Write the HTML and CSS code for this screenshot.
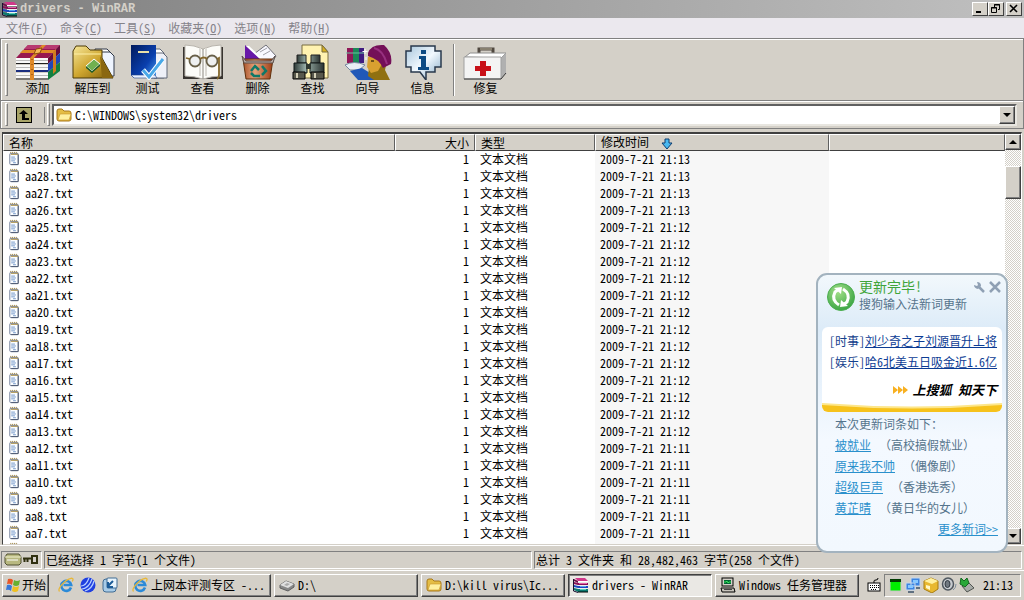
FILE: index.html
```html
<!DOCTYPE html>
<html lang="zh-CN">
<head>
    <meta charset="UTF-8">
    <meta name="viewport" content="width=device-width, initial-scale=1.0">
    <title>drivers - WinRAR</title>
    <link rel="stylesheet" href="styles.css">
</head>
<body>

    <!-- shared icons -->
    <svg class="defs" aria-hidden="true">
        <defs>
            <linearGradient id="gold" x1="0" y1="0" x2="1" y2="1">
                <stop offset="0" stop-color="#f6e79a"/><stop offset=".5" stop-color="#cfa62f"/><stop offset="1" stop-color="#7d5c08"/>
            </linearGradient>
            <linearGradient id="navy" x1="0" y1="0" x2="1" y2="1">
                <stop offset="0" stop-color="#001a5c"/><stop offset=".6" stop-color="#0a3fae"/><stop offset="1" stop-color="#4aa0f0"/>
            </linearGradient>
            <linearGradient id="copper" x1="0" y1="0" x2="1" y2="0">
                <stop offset="0" stop-color="#a8532a"/><stop offset=".4" stop-color="#e8a47c"/><stop offset="1" stop-color="#9a3c14"/>
            </linearGradient>
            <linearGradient id="steel" x1="0" y1="0" x2="1" y2="0">
                <stop offset="0" stop-color="#2e3a38"/><stop offset=".4" stop-color="#9db3ac"/><stop offset="1" stop-color="#2a3230"/>
            </linearGradient>
            <linearGradient id="bubble" x1="0" y1="0" x2="1" y2="1">
                <stop offset="0" stop-color="#a8c6dc"/><stop offset=".5" stop-color="#f2f9ff"/><stop offset="1" stop-color="#7fa6c4"/>
            </linearGradient>
            <radialGradient id="green" cx=".4" cy=".3" r=".8">
                <stop offset="0" stop-color="#a4e08a"/><stop offset="1" stop-color="#2f9e3c"/>
            </radialGradient>
        </defs>
        <symbol id="books" viewBox="0 0 16 16">
            <path d="M2 1h10l3 3H5z" fill="#d0388a"/><path d="M5 4h10v1H5z" fill="#fff"/>
            <path d="M1 2l4 2v2L1 4z" fill="#701048"/>
            <path d="M1 5l4 1h10v2H5L1 7z" fill="#8a1058"/><path d="M6 6h8v1H6z" fill="#e060a8"/>
            <path d="M1 8l4 1h10v2H5l-4-1z" fill="#1c48c0"/><path d="M5 8h10v1H5zM5 11h10v1H5z" fill="#eee"/><path d="M7 9h6v1H7z" fill="#58a0f0"/>
            <path d="M1 11l4 1h10v3H5l-4-2z" fill="#0c7a70"/><path d="M5 15h10" stroke="#000"/><path d="M7 12h6v1H7z" fill="#58d0b8"/>
            <path d="M.5 2v12L5 15.500" fill="none" stroke="#181030"/>
        </symbol>
        <symbol id="folder" viewBox="0 0 16 16">
            <path d="M1 4q0-2 2-2h3l2 2h5q2 0 2 2v6q0 2-2 2H3q-2 0-2-2z" fill="#e4bd45" stroke="#a8791a"/>
            <path d="M2 13l2-6h11l-2 6z" fill="#fff0a0" stroke="#c8962a" stroke-width=".6"/>
        </symbol>
        <symbol id="note" viewBox="0 0 12 16">
            <rect x="1.500" y="2.500" width="9" height="12" rx="1" fill="#fbfdff" stroke="#6f7c96"/>
            <path d="M10.500 4v10.500H3" fill="none" stroke="#4c5870"/>
            <path d="M2 1.500h1M4 1.500h1M6 1.500h1M8 1.500h1M2.500 3.500h8" stroke="#a08030"/>
            <path d="M3 6.500h4M3 8.500h5M3 10.500h4M5 12.500h3" stroke="#6f94c8"/>
        </symbol>
        <symbol id="ie" viewBox="0 0 16 16">
            <path d="M13 10.500A5 5 0 1 1 13.200 8H5.500" fill="none" stroke="#2b8ad8" stroke-width="2.600"/>
            <path d="M1.500 14.500C-1 12 7 2.500 13 1.300c3-.4 2 2 1.200 3.200" fill="none" stroke="#e8b838" stroke-width="1.300"/>
        </symbol>
        <symbol id="pc" viewBox="0 0 16 16">
            <rect x="2" y="1" width="11" height="8" fill="#d4d0c8" stroke="#000"/><rect x="4" y="3" width="7" height="4" fill="#063"/>
            <path d="M4 5h2l1-1 1 2 1-1h2" stroke="#4f6" fill="none" stroke-width=".8"/>
            <path d="M1 11h13l1 4H2z" fill="#c8c4bc" stroke="#000"/><path d="M4 12.500h8" stroke="#444"/>
        </symbol>
    </svg>

    <div class="desktop">
        <header class="title-bar">
            <svg class="icon16"><use href="#books"/></svg>
            <h1>drivers - WinRAR</h1>
            <div class="window-buttons">
                <button type="button" aria-label="最小化"><svg viewBox="0 0 12 10"><path d="M2 8h5" stroke="#000" stroke-width="2"/></svg></button>
                <button type="button" aria-label="还原"><svg viewBox="0 0 12 10"><path d="M4.500 3V.5h5v5H8M4 1h6M1.500 3.500h5v5h-5zM1 4h6" fill="none" stroke="#000"/></svg></button>
                <button type="button" class="close" aria-label="关闭"><svg viewBox="0 0 12 10"><path d="M2 1l7 7M9 1L2 8" stroke="#000" stroke-width="1.600"/></svg></button>
            </div>
        </header>

        <nav class="menu-bar">
            <button type="button">文件(<u>F</u>)</button>
            <button type="button">命令(<u>C</u>)</button>
            <button type="button">工具(<u>S</u>)</button>
            <button type="button">收藏夹(<u>O</u>)</button>
            <button type="button">选项(<u>N</u>)</button>
            <button type="button">帮助(<u>H</u>)</button>
        </nav>

        <div class="toolbar">
            <span class="grip"></span>
            <button type="button">
                <svg viewBox="0 0 48 36">
                    <path d="M2 14L14 1h32L34 14z" fill="#981850"/><path d="M14 1h32l-4 4H10z" fill="#b83a70"/>
                    <path d="M34 14L46 1v8L34 20z" fill="#6a0c3c"/><path d="M34 20L46 9v9L34 28z" fill="#2046b8"/><path d="M34 28l12-10v9L34 36z" fill="#128040"/>
                    <path d="M2 14h32v5H2zM2 21h32v5H2zM2 29h32v5H2z" fill="#f8f8f8"/>
                    <path d="M2 19.500h32M2 35h32" stroke="#202020"/><path d="M2 27h32" stroke="#1a2e80" stroke-width="2"/><path d="M2 16.500h32M2 23.500h32M2 31.500h32" stroke="#b8b8b8"/>
                    <path d="M16 14L28 1h4L20 14v22h-4zM9 6h32v3H6z" fill="#e08a28"/><path d="M39 8l3-3v22l-3 3z" fill="#d07c20"/>
                    <path d="M18 15v20" stroke="#7c3c08" stroke-dasharray="1 4"/><path d="M22 5l6-1-2 5-6 1z" fill="#f8b858" stroke="#8a480c"/>
                </svg>添加
            </button>
            <button type="button">
                <svg viewBox="0 0 48 36">
                    <path d="M26 5h12l5 5v20H26z" fill="#fff" stroke="#303848"/><path d="M32 8h9l4 4v20H32z" fill="#eef4ff" stroke="#303848"/>
                    <path d="M4 34V7l3-5h10l4 4h12v8l11 20z" fill="url(#gold)" stroke="#4c3a08"/>
                    <path d="M5 10h27" stroke="#fff0a8"/><path d="M31 12l13 22H33z" fill="#8a6710"/>
                    <path d="M17 22l8-7 6 5-8 7z" fill="#70b050" stroke="#fff"/><path d="M17 22l6 5v2l-6-5zM23 27l8-7v2l-8 7z" fill="#1e5c28"/>
                </svg>解压到
            </button>
            <button type="button">
                <svg viewBox="0 0 48 36">
                    <path d="M24 5h12l4 4v25H24z" fill="#fff" stroke="#606878"/><path d="M30 9h9l4 4v21H30z" fill="#eef0f8" stroke="#606878"/>
                    <path d="M7 1h25v33H10l-3-3z" fill="url(#navy)"/><path d="M7 31h24l2 3H10z" fill="#e8f0ff" stroke="#204080" stroke-width=".6"/>
                    <path d="M14 8h11" stroke="#e8e0a8" stroke-width="2"/><path d="M19 26l6 7 13-17" fill="none" stroke="#fff" stroke-width="5"/><path d="M19 26l6 7 14-18" fill="none" stroke="#48a8e8" stroke-width="3"/>
                </svg>测试
            </button>
            <button type="button">
                <svg viewBox="0 0 48 36">
                    <path d="M4 3h2v29h36V3h2v32H4z" fill="#383430"/><path d="M6 1q9 0 18 4Q33 1 42 1v31q-9 0-18 3-9-3-18-3z" fill="#fcfcf8" stroke="#b8b4ac"/>
                    <path d="M24 5v30" stroke="#8c8880"/><path d="M21 4v28M27 4v28" stroke="#dcdad4" stroke-width="2"/>
                    <circle cx="16" cy="17" r="5.500" fill="#eef0f0" stroke="#686048" stroke-width="1.800"/><circle cx="33" cy="17" r="5.500" fill="#eef0f0" stroke="#686048" stroke-width="1.800"/>
                    <path d="M21 15q4-3 7 0M11 15l-4-1M38 15l2-1v17q0 3-2 4" fill="none" stroke="#84682c" stroke-width="1.800"/>
                </svg>查看
            </button>
            <button type="button">
                <svg viewBox="0 0 48 36">
                    <path d="M20 10l12-9 10 11-4 6H20z" fill="#f8f8ff" stroke="#707078"/><path d="M26 8l7-4M29 11l7-4" stroke="#a0a0a8"/>
                    <path d="M11 1l18 16H11z" fill="#6818a8"/><path d="M12 2l3 0 16 15h-3z" fill="#fff"/>
                    <path d="M9 15h30l-3 20H12z" fill="url(#copper)" stroke="#60300c"/><path d="M8 12l4 5h25l4-5-2 7H10z" fill="#b8a8a0" stroke="#5c504c"/>
                    <path d="M17 27l4-5 4 4M28 22l4 5-4 4M26 32h-6l-3-3" fill="none" stroke="#107868" stroke-width="2.500"/>
                </svg>删除
            </button>
            <button type="button">
                <svg viewBox="0 0 48 36">
                    <path d="M13 1h20l6 7v26H13z" fill="#fff2b0" stroke="#786c40"/><path d="M33 1v7h6z" fill="#d8b020" stroke="#786c40"/>
                    <path d="M8 11h9v8H8zM22 11h9v8h-9z" fill="url(#steel)" stroke="#202020"/>
                    <path d="M5 19h13v10H5zM21 19h14v10H21z" fill="url(#steel)" stroke="#101818"/>
                    <path d="M4 28h12v7H4zM22 28h13v7H22z" fill="#58584c" stroke="#000"/><path d="M8 29v5M26 29v5" stroke="#d4d0b8" stroke-width="2"/><path d="M17 20h5v5h-5z" fill="#303830"/>
                </svg>查找
            </button>
            <button type="button">
                <svg viewBox="0 0 48 36">
                    <path d="M3 4h6v15H3z" fill="#901858"/><path d="M9 4h6v15H9z" fill="#1c8858"/><path d="M15 4h5v15h-5z" fill="#401c80"/><path d="M2 9h18" stroke="#68c0a0"/>
                    <path d="M1 21q9-5 20 0l-6 5H6z" fill="#e8eef4" stroke="#7888a0"/><path d="M6 27l12-3 8 5 7 7H14z" fill="#2058b8"/>
                    <path d="M26 14q8-7 17 3l-2 9 5 10H30l-6-4z" fill="#907010"/><path d="M24 13l6-3 8 10-4 7-7 2-4-6z" fill="#d8a030"/>
                    <path d="M24 9q3-9 16-8 9 8 7 19l-8 4q-4-9-15-12z" fill="#741058"/><path d="M30 4q9 2 13 16" stroke="#983080" fill="none" stroke-width="2"/>
                    <path d="M27 17h3" stroke="#000"/><path d="M21 5v5M18.500 7.500h5M22 13v3" stroke="#fff"/>
                </svg>向导
            </button>
            <button type="button">
                <svg viewBox="0 0 48 36">
                    <path d="M12 2h24v5h6v16h-6v5H27v8l-6-8h-9v-5H7V7h5z" fill="url(#bubble)" stroke="#28384c" stroke-width="1.500"/>
                    <path d="M22 6h5v4h-5zM20 12h7v11h3v3H19v-3h3v-8h-2z" fill="#0c4a84"/>
                </svg>信息
            </button>
            <span class="separator"></span>
            <button type="button">
                <svg viewBox="0 0 48 36">
                    <path d="M17 10V5h14v5" fill="none" stroke="#504840" stroke-width="3"/><path d="M18 5h12" stroke="#c0b8a0"/>
                    <path d="M3 13l5-4h36l-5 5z" fill="#fff" stroke="#909090"/><path d="M39 14l5-5v20l-5 6z" fill="#b0b0b0"/>
                    <path d="M2 13h37v22H2z" fill="#f4f4f4" stroke="#a0a0a0"/><path d="M2 35h37l5-6" fill="none" stroke="#383838"/>
                    <path d="M18 17h6v5h5v5h-5v5h-6v-5h-5v-5h5z" fill="#c81018"/>
                </svg>修复
            </button>
        </div>

        <div class="address-row">
            <span class="grip"></span>
            <button type="button" class="up-button" aria-label="向上">
                <svg viewBox="0 0 16 16"><rect x=".5" y=".5" width="15" height="15" fill="#a8a468" stroke="#000"/><path d="M3 7l4.500-4L12 7H9v4h4v2H6V7z"/></svg>
            </button>
            <span class="grip"></span>
            <div class="address">
                <svg class="icon16"><use href="#folder"/></svg>
                <select aria-label="地址"><option>C:\WINDOWS\system32\drivers</option></select>
                <span class="arrow-box"><i class="arrow-down"></i></span>
            </div>
        </div>

        <main class="file-list">
            <div class="table-wrap">
                <table>
                    <colgroup>
                        <col class="col-name"><col class="col-size"><col class="col-type"><col class="col-date"><col>
                    </colgroup>
                    <thead>
                        <tr>
                            <th>名称</th>
                            <th class="size">大小</th>
                            <th>类型</th>
                            <th>修改时间<svg class="sort" viewBox="0 0 12 12"><path d="M4 1h4v4h3L6 11 1 5h3z" fill="#48b8f0" stroke="#0c3c70"/></svg></th>
                            <th></th>
                        </tr>
                    </thead>
                    <tbody id="files"></tbody>
                </table>
            </div>
            <div class="scrollbar">
                <button type="button" aria-label="向上滚动"><i class="arrow-up"></i></button>
                <span class="thumb"></span>
                <button type="button" class="scroll-down" aria-label="向下滚动"><i class="arrow-down"></i></button>
            </div>
        </main>

        <div class="status-bar">
            <div class="pane pane-icons">
                <svg viewBox="0 0 36 14">
                    <path d="M2 5l2-3h12l2 3v6l-2 2H4l-2-2z" fill="#b8b880" stroke="#505030"/><path d="M2 5h16" stroke="#f4f4d0"/><path d="M4 8h11" stroke="#fff"/>
                    <path d="M20 6.500h9M21.500 7v3M24.500 7v3M29 4h5v7h-5z" fill="none" stroke="#303010" stroke-width="2"/>
                </svg>
            </div>
            <div class="pane pane-selected">已经选择 1 字节(1 个文件)</div>
            <div class="pane pane-total">总计 3 文件夹 和 28,482,463 字节(258 个文件)</div>
        </div>

        <footer class="taskbar">
            <button type="button" class="start">
                <svg class="icon16" viewBox="0 0 16 16"><path d="M3 2q3-1 5 1L7 8Q5 6 2 7z" fill="#e85828"/><path d="M9 3q3 2 6 0l-1 5q-3 2-6 0z" fill="#68b030"/><path d="M2 8q3-1 5 1l-1 5q-2-2-5-1z" fill="#3878d8"/><path d="M8 9q3 2 6 0l-1 5q-3 2-6 0z" fill="#f0c020"/></svg>开始
            </button>
            <div class="quick-launch">
                <button type="button" aria-label="Internet Explorer"><svg class="icon16"><use href="#ie"/></svg></button>
                <button type="button" aria-label="浏览器"><svg class="icon16" viewBox="0 0 16 16"><circle cx="8" cy="8" r="7.500" fill="#2040e0"/><path d="M1 9q5 0 8-8M2 12q7-1 10-10M5 14q7-2 9-10" fill="none" stroke="#b8d0ff" stroke-width="1.200"/></svg></button>
                <button type="button" aria-label="显示桌面"><svg class="icon16" viewBox="0 0 16 16"><rect x="1" y="2" width="13" height="13" rx="3" fill="#a8cce8" stroke="#406c94"/><rect x="5" y="1" width="10" height="10" rx="1" fill="#e8f4fc" stroke="#406c94"/><path d="M11 4l-5 5M6 5v5h5" fill="none" stroke="#1c5c98" stroke-width="2"/></svg></button>
            </div>
            <div class="tasks">
                <button type="button"><svg class="icon16"><use href="#ie"/></svg><span>上网本评测专区 -...</span></button>
                <button type="button"><svg class="icon16" viewBox="0 0 16 16"><path d="M1 8l6-4 8 3v3l-6 4-8-3z" fill="#888" stroke="#606060"/><path d="M1 8l6-4 8 3-6 4z" fill="#e0e0e0"/><path d="M5 8l3-2 3 1-3 2z" fill="#aaa"/></svg><span>D:\</span></button>
                <button type="button"><svg class="icon16"><use href="#folder"/></svg><span>D:\kill virus\Ic...</span></button>
                <button type="button" class="active"><svg class="icon16"><use href="#books"/></svg><span>drivers - WinRAR</span></button>
                <button type="button"><svg class="icon16"><use href="#pc"/></svg><span>Windows 任务管理器</span></button>
            </div>
            <svg class="keyboard" viewBox="0 0 14 14"><path d="M7 5V3q0-1 2-1t2-2" fill="none" stroke="#000"/><rect x="1" y="5" width="12" height="8" fill="#fff" stroke="#000"/><path d="M3 7.500h9M3 9.500h9M4 11.500h6" stroke="#000" stroke-dasharray="1 1"/></svg>
            <div class="tray">
                <svg viewBox="0 0 16 16"><path d="M3 2h11v12H3z" fill="#0e0" stroke="#c8c8c8"/><path d="M3 2h11v3H3z" fill="#023c02"/></svg>
                <svg viewBox="0 0 16 16"><path d="M6 1h9v8H6zM1 6h9v7H1z" fill="#3c84e0" stroke="#c8d8ec"/><path d="M8 3h5v3H8zM3 8h5v3H3z" fill="#88c8ff"/><path d="M3 15h6M11 11h4" stroke="#607080" stroke-width="2"/></svg>
                <svg viewBox="0 0 16 16"><path d="M1 4l7-3 7 3v8l-6 4-8-4z" fill="#e8b830" stroke="#a87c10"/><path d="M1 4l8 3 6-3-7-3z" fill="#fff0a0"/><path d="M3 8l4 1v4l-4-2z" fill="#fff8c8"/></svg>
                <svg viewBox="0 0 16 16"><ellipse cx="7" cy="7" rx="5.500" ry="6" fill="#c8ccd0" stroke="#505860" stroke-width="1.500"/><ellipse cx="6.500" cy="7" rx="2.500" ry="3.500" fill="#707880" stroke="#303840"/><path d="M12 13q3-2 3-6" fill="none" stroke="#8090a0"/></svg>
                <svg viewBox="0 0 16 16"><path d="M3 9l7-3 5 5-7 4z" fill="#a8aca8" stroke="#505450"/><path d="M2 1l3 3 3-3 2 5-4 4-5-3z" fill="#28a838" stroke="#146820"/></svg>
                <time>21:13</time>
            </div>
        </footer>

        <aside class="popup">
            <div class="popup-head">
                <svg class="refresh" viewBox="0 0 28 28">
                    <circle cx="14" cy="14" r="13.500" fill="url(#green)" stroke="#4cae50"/>
                    <path d="M12 22Q4 17 8 9l4-3" fill="none" stroke="#fff" stroke-width="3"/><path d="M16 6q8 5 4 13l-4 3" fill="none" stroke="#fff" stroke-width="3"/>
                    <path d="M7 5l8-1-1 7zM21 23l-8 1 1-7z" fill="#fff"/>
                </svg>
                <div class="popup-title">
                    <h2>更新完毕!</h2>
                    <p>搜狗输入法新词更新</p>
                </div>
                <div class="popup-tools">
                    <button type="button" aria-label="设置"><svg viewBox="0 0 12 12"><path d="M5 5l6 6" stroke="#8fa0b4" stroke-width="2.500"/><path d="M4 1q4 0 4 4L5 8Q1 7 1 4l3 1 1-1z" fill="#8fa0b4"/></svg></button>
                    <button type="button" aria-label="关闭"><svg viewBox="0 0 12 12"><path d="M1 1l10 10M11 1L1 11" stroke="#8fa0b4" stroke-width="2.500"/></svg></button>
                </div>
            </div>
            <div class="news">
                <p>[时事]<a href="#">刘少奇之子刘源晋升上将</a></p>
                <p>[娱乐]<a href="#">哈6北美五日吸金近1.6亿</a></p>
                <p class="slogan">
                    <svg viewBox="0 0 16 8"><path d="M0 0l5 4-5 4zM5 0l5 4-5 4zM10 0l5 4-5 4z" fill="#f8b020"/></svg>上搜狐 知天下
                </p>
                <svg class="swoosh" viewBox="0 0 178 12" preserveAspectRatio="none"><path d="M0 4Q89 11 178 4v8H0z" fill="#f6c21c"/><path d="M0 4Q89 11 178 4" fill="none" stroke="#fde68a" stroke-width="2"/></svg>
            </div>
            <div class="words">
                <p>本次更新词条如下：</p>
                <p><a href="#">被就业</a>（高校搞假就业）</p>
                <p><a href="#">原来我不帅</a>（偶像剧）</p>
                <p><a href="#">超级巨声</a>（香港选秀）</p>
                <p><a href="#">黄芷晴</a>（黄日华的女儿）</p>
                <p class="more"><a href="#">更多新词&gt;&gt;</a></p>
            </div>
        </aside>
    </div>

    <script>
        const filesBody = document.getElementById('files');

        // Newest first
        for (let n = 29; n >= 6; n--) {
            let minute = 12;
            if (n >= 26) minute = 13;
            if (n <= 12) minute = 11;

            const row = document.createElement('tr');
            row.innerHTML =
                '<td><svg class="note"><use href="#note"/></svg>aa' + n + '.txt</td>' +
                '<td class="size">1</td>' +
                '<td>文本文档</td>' +
                '<td class="sorted">2009-7-21 21:' + minute + '</td>' +
                '<td></td>';
            filesBody.appendChild(row);
        }
    </script>

</body>
</html>
```

FILE: styles.css
```css
* {
    box-sizing: border-box;
}
body {
    margin: 0;
    font-family: "Noto Sans CJK SC", sans-serif;
    font-size: 12px;
    line-height: 16px;
    font-feature-settings: "hwid";
    background: #d4d0c8;
    color: #000;
}
h1, h2, p {
    margin: 0;
    font-weight: normal;
}
button, select {
    font: inherit;
    font-feature-settings: inherit;
    color: inherit;
    padding: 0;
    border: none;
    background: none;
}
svg {
    display: block;
    flex: none;
}
.defs {
    width: 0;
    height: 0;
}
.icon16 {
    width: 16px;
    height: 16px;
}
.desktop {
    position: relative;
    display: flex;
    flex-direction: column;
    height: 100vh;
    overflow: hidden;
}

/* title and menu */
.title-bar {
    display: flex;
    align-items: center;
    gap: 2px;
    height: 18px;
    padding: 0 2px;
    background: linear-gradient(90deg, #808080, #c0c0c0);
}
.title-bar h1 {
    flex: 1;
    font: bold 12px/16px "Liberation Mono", monospace;
    color: #d4d0c8;
}
.window-buttons {
    display: flex;
}
.window-buttons button {
    width: 16px;
    height: 14px;
    background: #d4d0c8;
    border: 1px solid;
    border-color: #fff #404040 #404040 #fff;
}
.window-buttons .close {
    margin-left: 2px;
}
.window-buttons svg {
    width: 12px;
    height: 10px;
    margin: auto;
}
.menu-bar {
    display: flex;
    height: 20px;
    background: #ebe8ee;
    color: #85838a;
}
.menu-bar button {
    padding: 0 6px;
}

/* toolbars */
.toolbar {
    display: flex;
    align-items: center;
    height: 63px;
    padding: 2px 4px;
    border: 1px solid #808080;
    box-shadow: inset 1px 1px #fff;
}
.grip {
    width: 3px;
    align-self: stretch;
    margin: 2px 0;
    border: 1px solid;
    border-color: #fff #808080 #808080 #fff;
}
.toolbar button {
    display: flex;
    flex-direction: column;
    align-items: center;
    width: 55px;
    padding-top: 1px;
}
.toolbar .grip + button {
    margin-left: 2px;
}
.toolbar button svg {
    width: 48px;
    height: 36px;
}
.separator {
    width: 2px;
    height: 52px;
    margin: 0 3px;
    border-left: 1px solid #808080;
    border-right: 1px solid #fff;
}
.address-row {
    display: flex;
    align-items: center;
    height: 28px;
    padding: 0 6px 0 4px;
    border: 1px solid #808080;
    border-top: none;
    box-shadow: inset 1px 1px #fff;
}
.up-button {
    width: 37px;
    padding-right: 4px;
    border-right: 1px solid #808080;
}
.up-button svg {
    width: 16px;
    height: 16px;
    margin: auto;
}
.up-button + .grip {
    margin-left: 2px;
}
.address {
    flex: 1;
    display: flex;
    align-items: center;
    height: 22px;
    margin-left: 2px;
    padding-left: 2px;
    background: #fff;
    border: 2px solid;
    border-color: #606060 #e8e6e0 #e8e6e0 #606060;
}
.address select {
    flex: 1;
    appearance: none;
    margin-left: 3px;
}
.arrow-box, .scrollbar button, .thumb {
    display: flex;
    align-items: center;
    justify-content: center;
    width: 16px;
    height: 18px;
    background: #d4d0c8;
    border: 1px solid;
    border-color: #fff #404040 #404040 #fff;
    box-shadow: inset -1px -1px #808080;
}
.arrow-down, .arrow-up {
    border: 4px solid transparent;
    border-bottom: none;
    border-top-color: #000;
}
.arrow-up {
    border-top: none;
    border-bottom: 4px solid #000;
}

/* file list */
.file-list {
    flex: 1;
    min-height: 0;
    display: flex;
    margin: 3px 2px 0;
    background: #fff;
    border: 1px solid #404040;
    border-top-width: 2px;
    border-color: #404040 #fff #d4d0c8 #404040;
}
.table-wrap {
    flex: 1;
    overflow: hidden;
}
table {
    width: 100%;
    table-layout: fixed;
    border-collapse: separate;
    border-spacing: 0;
}
.col-name {
    width: 392px;
}
.col-size {
    width: 80px;
}
.col-type {
    width: 120px;
}
.col-date {
    width: 234px;
}
th {
    height: 16px;
    padding: 0 5px;
    line-height: 14px;
    font-weight: normal;
    text-align: left;
    background: #d4d0c8;
    border: 1px solid;
    border-color: #fff #606060 #404040 #fff;
}
td {
    height: 17px;
    padding: 0 6px 2px 5px;
    line-height: 15px;
    white-space: nowrap;
}
.size {
    text-align: right;
}
.sorted {
    background: #f7f7f7;
}
.note {
    display: inline-block;
    width: 12px;
    height: 15px;
    margin-right: 5px;
    vertical-align: top;
}
.sort {
    display: inline-block;
    width: 12px;
    height: 12px;
    margin-left: 12px;
    vertical-align: text-bottom;
}
.scrollbar {
    display: flex;
    flex-direction: column;
    width: 16px;
    background: repeating-conic-gradient(#d4d0c8 0 25%, #fff 0 50%) 0 0 / 2px 2px;
}
.scrollbar button {
    height: 16px;
}
.thumb {
    height: 33px;
    margin-top: 16px;
}
.scrollbar .scroll-down {
    margin-top: auto;
}

/* status bar */
.status-bar {
    display: flex;
    gap: 2px;
    padding: 5px 2px 1px 1px;
    border-top: 1px solid #fff;
}
.pane {
    height: 18px;
    padding: 0 1px;
    border: 1px solid;
    border-color: #808080 #fff #fff #808080;
    white-space: nowrap;
}
.pane-icons {
    width: 41px;
}
.pane-icons svg {
    width: 36px;
    height: 14px;
}
.pane-selected, .pane-total {
    flex: 1;
}

/* taskbar */
.taskbar {
    display: flex;
    align-items: center;
    height: 30px;
    padding: 0 3px 1px 2px;
    border-top: 1px solid #fff;
}
.start, .tasks button {
    display: flex;
    align-items: center;
    height: 23px;
    border: 1px solid;
    border-color: #fff #404040 #404040 #fff;
    box-shadow: inset -1px -1px #808080;
}
.start {
    width: 47px;
    padding-left: 2px;
    gap: 1px;
    white-space: nowrap;
}
.quick-launch {
    display: flex;
    gap: 6px;
    padding: 0 9px;
}
.tasks {
    flex: 1;
    display: flex;
    gap: 3px;
}
.tasks button {
    flex: 0 1 144px;
    gap: 3px;
    padding: 0 4px;
    overflow: hidden;
    white-space: nowrap;
}
.tasks .active {
    border-color: #404040 #fff #fff #404040;
    box-shadow: inset 1px 1px #808080;
    background: #eae8e4;
}
.keyboard {
    width: 14px;
    height: 14px;
    margin: 0 3px;
}
.tray {
    display: flex;
    align-items: center;
    gap: 2px;
    height: 23px;
    padding: 0 7px 0 2px;
    border: 1px solid;
    border-color: #808080 #fff #fff #808080;
}
.tray svg {
    width: 16px;
    height: 16px;
}
.tray time {
    margin-left: 6px;
}

/* update notice above the tray */
.popup {
    position: absolute;
    right: 16px;
    bottom: 47px;
    width: 192px;
    padding: 2px 5px 5px;
    background: linear-gradient(#f2f8fc, #dcebf8 20%, #f4f9ff 60%, #f2f8fe);
    border: 2px solid #a3b3bf;
    border-radius: 11px;
    color: #55748c;
}
.popup-head {
    display: flex;
    gap: 4px;
    padding-left: 4px;
}
.refresh {
    width: 28px;
    height: 28px;
    margin-top: 6px;
}
.popup-title {
    flex: 1;
    line-height: 18px;
    white-space: nowrap;
}
.popup h2 {
    font-size: 14px;
    line-height: 18px;
    color: #3fa53a;
}
.popup-tools {
    display: flex;
    gap: 4px;
    height: 12px;
    margin: 4px 0 0 -40px;
}
.popup-tools svg {
    width: 12px;
    height: 12px;
}
.news {
    margin: 14px -1px 0;
    padding-top: 3px;
    background: #fff;
    border-radius: 6px;
    overflow: hidden;
    color: #14408c;
}
.news p {
    padding: 0 5px 0 7px;
    line-height: 21px;
    white-space: nowrap;
}
.news a {
    color: #0c3c94;
}
.news .slogan {
    display: flex;
    align-items: center;
    justify-content: flex-end;
    gap: 3px;
    margin-top: 7px;
    font-size: 13px;
    font-weight: bold;
    font-style: italic;
    color: #000;
}
.slogan svg {
    width: 16px;
    height: 8px;
}
.swoosh {
    width: 100%;
    height: 12px;
}
.words {
    padding: 1px 3px 7px 12px;
    line-height: 21px;
    white-space: nowrap;
    font-feature-settings: normal;
}
.words a {
    margin-right: 8px;
    color: #2a90cc;
}
.words .more {
    text-align: right;
    font-feature-settings: "hwid";
}
.words .more a {
    margin-right: 0;
}
```
